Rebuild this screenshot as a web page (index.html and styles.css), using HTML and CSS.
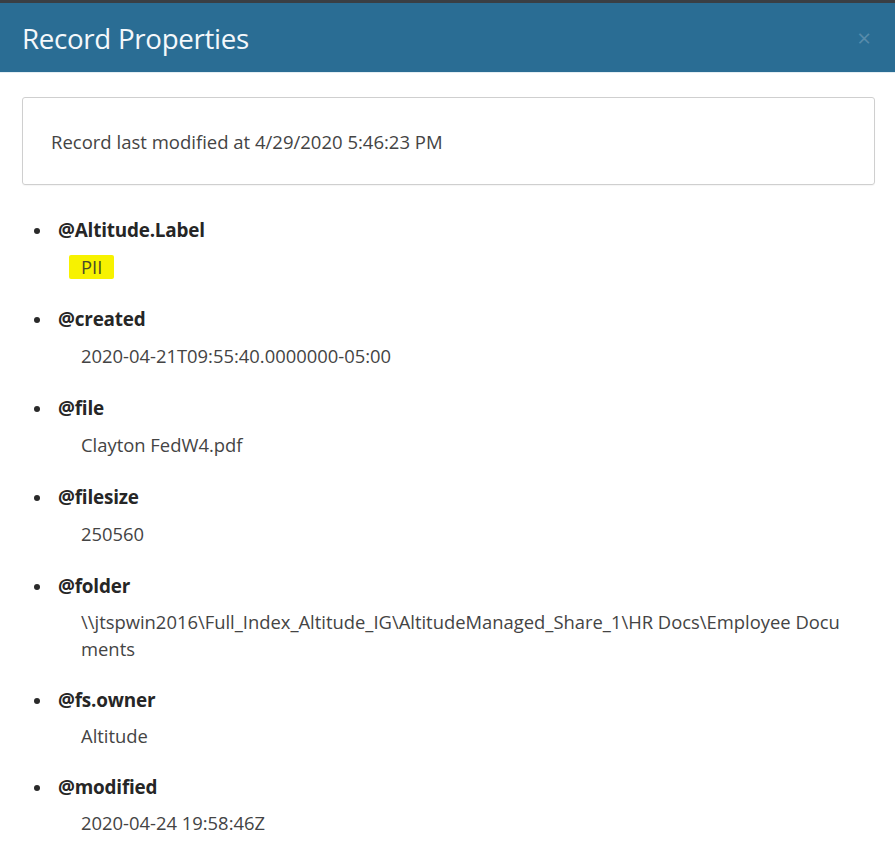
FILE: index.html
```html
<!DOCTYPE html>
<html>
<head>
<meta charset="utf-8">
<link rel="stylesheet" href="styles.css">
</head>
<body>
<div class="topstrip"></div>
<header class="modal-header">
  <h1 class="modal-title">Record Properties</h1>
  <span class="close">×</span>
</header>
<main class="modal-body">
  <div class="info-box">Record last modified at 4/29/2020 5:46:23 PM</div>
  <ul class="props">
    <li>
      <div class="prop-name">@Altitude.Label</div>
      <div class="prop-value"><span class="hl">PII</span></div>
    </li>
    <li>
      <div class="prop-name">@created</div>
      <div class="prop-value">2020-04-21T09:55:40.0000000-05:00</div>
    </li>
    <li>
      <div class="prop-name">@file</div>
      <div class="prop-value">Clayton FedW4.pdf</div>
    </li>
    <li>
      <div class="prop-name">@filesize</div>
      <div class="prop-value">250560</div>
    </li>
    <li>
      <div class="prop-name">@folder</div>
      <div class="prop-value">\\jtspwin2016\Full_Index_Altitude_IG\AltitudeManaged_Share_1\HR Docs\Employee Documents</div>
    </li>
    <li>
      <div class="prop-name">@fs.owner</div>
      <div class="prop-value">Altitude</div>
    </li>
    <li>
      <div class="prop-name">@modified</div>
      <div class="prop-value">2020-04-24 19:58:46Z</div>
    </li>
  </ul>
</main>
</body>
</html>
```

FILE: styles.css
```css
html, body {
  margin: 0;
  padding: 0;
  background: #ffffff;
  font-family: "Open Sans", "Noto Sans", "Liberation Sans", sans-serif;
}

.topstrip {
  height: 3px;
  background: #3a3f44;
}

.modal-header {
  height: 69px;
  background: #2a6d94;
  display: flex;
  align-items: center;
  justify-content: space-between;
  padding: 0 22px;
  border-bottom: 1px solid #e4eef3;
}

.modal-title {
  margin: 0;
  font-size: 27.7px;
  font-weight: 400;
  color: #f4f8fb;
  letter-spacing: -0.3px;
}

.close {
  color: rgba(255, 255, 255, 0.22);
  font-size: 24px;
  line-height: 1;
  margin-right: 2px;
}

.modal-body {
  padding: 24px 20px 0 22px;
}

.info-box {
  height: 86px;
  border: 1px solid #cfcfcf;
  border-radius: 3px;
  box-shadow: 0 1px 1px rgba(0, 0, 0, 0.04);
  display: flex;
  align-items: center;
  padding-left: 28px;
  font-size: 18.5px;
  color: #444444;
}

.props {
  margin: 32px 0 0 0;
  padding: 0 26px 0 36px;
  list-style: none;
  color: #222222;
}

.props li {
  margin-bottom: 26px;
}

.prop-name {
  position: relative;
  font-weight: 700;
  font-size: 18.9px;
  line-height: 27px;
  color: #262626;
  letter-spacing: -0.2px;
}

.prop-name::before {
  content: "";
  position: absolute;
  left: -24px;
  top: 11px;
  width: 6px;
  height: 6px;
  border-radius: 50%;
  background: #2a2a2a;
}

.prop-value {
  margin-top: 9px;
  padding-left: 23px;
  font-size: 18.4px;
  line-height: 27px;
  color: #444444;
  word-break: break-all;
}

.props li:nth-child(n+5) .prop-value {
  margin-top: 8px;
}

.props li:nth-child(n+5) {
  margin-bottom: 25px;
}

.hl {
  background: #f7f200;
  padding: 0 12px;
  margin-left: -12px;
  border-radius: 2px;
  display: inline-block;
  line-height: 24px;
  color: #4a4a2a;
}
```
